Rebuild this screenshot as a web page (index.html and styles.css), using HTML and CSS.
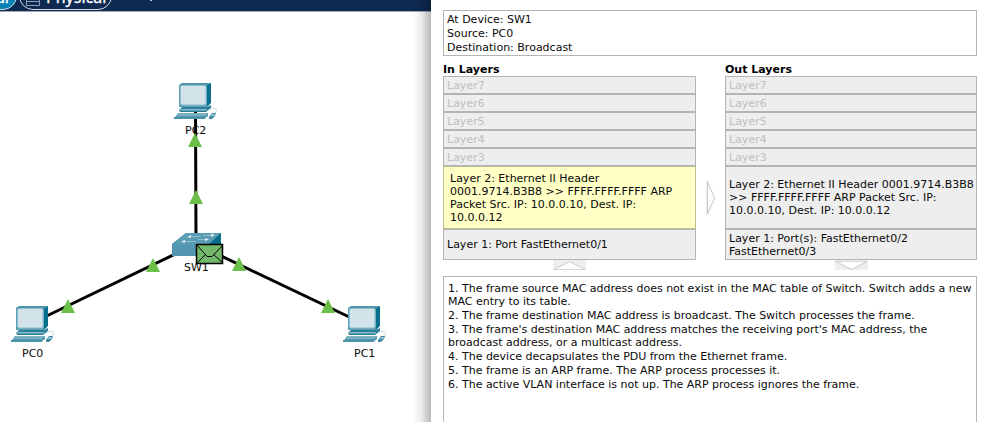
FILE: index.html
```html
<!DOCTYPE html>
<html lang="en">
<head>
<meta charset="utf-8">
<title>PDU Information</title>
<link rel="stylesheet" href="styles.css">
</head>
<body>
<main class="app">
  <section class="workspace">
    <header class="toolbar">
      <div class="tab tab-active"><span>Logical</span></div>
      <div class="tab tab-physical">
        <svg class="tab-icon" width="14" height="12" viewBox="0 0 14 12"><path d="M.5 0V11.500H13.500V0M0 3.500H14M0 7.500H14" fill="none" stroke="#8e9db2"/></svg>
        <span>Physical</span>
      </div>
      <i class="tick"></i>
    </header>
    <svg class="topology" width="431" height="411" viewBox="0 11 431 411">
      <defs>
        <g id="pc">
          <path d="M5 2 8 0H37L33 2V24H5Z" fill="#4d94ab"/>
          <path d="M33 2 37 0V20L33 24Z" fill="#08708c"/>
          <path d="M5 2H33V24H5Z" fill="#5b9fb5"/>
          <rect x="6.500" y="2.500" width="25.500" height="19.500" rx="2" fill="#d3e3ea" stroke="#8fc0d0"/>
          <path d="M8 24H33L37 22V25L32 29H6L5 27Z" fill="#2b8099"/>
          <path d="M5 26H33V27.500H5Z" fill="#8ab9ca"/>
          <path d="M4 30H34V33L30 36H0Z" fill="#4f98ae"/>
          <path d="M5 30H34L31 33H2Z" fill="#7cb1c3"/>
          <path d="M0 34H31V36H0Z" fill="#4c93a9"/>
          <path d="M35 34 38 30H42L41 33 38 36H35Z" fill="#3e8ba3"/>
          <path d="M36 33 38 31H42L40 33Z" fill="#95c1cf"/>
          <path d="M36 26C41 24 45 27 41 30" fill="none" stroke="#c7dce4"/>
        </g>
        <path id="up" d="M0-7 7 7H-7Z" fill="#6cc04a"/>
      </defs>
      <g stroke="#000" stroke-width="3">
        <path d="M195.500 108 196 240M196 244 30 324M196 244 364 324"/>
      </g>
      <use href="#pc" x="174" y="83"/>
      <use href="#pc" x="11" y="306"/>
      <use href="#pc" x="343" y="306"/>
      <g>
        <path d="M172 244 186 233H221V245L209 256H172Z" fill="#4f98b0"/>
        <path d="M172 244 186 233H221L209 244Z" fill="#5a9cb3"/>
        <path d="M209 244 221 233V247L209 256Z" fill="#056d8a"/>
        <path d="M172 244H209V256H172Z" fill="#5396b1"/>
        <path d="M190 236.500H201M203 235.500H212M185 241.500H196M198 239.500H206" stroke="#8dbccb"/>
        <path d="M187 237 191 235V238ZM215 235 211 233.500V237ZM181 241.500 185 240V243ZM209 239.500 205 238V241Z" fill="#e4f0f4"/>
      </g>
      <g class="device-label">
        <text x="185" y="134">PC2</text>
        <text x="184" y="271">SW1</text>
        <text x="22" y="357">PC0</text>
        <text x="354" y="357">PC1</text>
      </g>
      <use href="#up" x="195" y="140"/>
      <use href="#up" x="196" y="197"/>
      <use href="#up" x="153" y="265"/>
      <use href="#up" x="239" y="264"/>
      <use href="#up" x="68" y="306"/>
      <use href="#up" x="328" y="306"/>
      <rect x="196.500" y="244.500" width="26" height="19" fill="#74b86c" stroke="#000" stroke-width="1.500"/>
      <path d="M197 245 207 256.500H212L223 245M197 263 205.500 254.500M223 263 213.500 254.500" fill="none" stroke="#000"/>
    </svg>
  </section>
  <section class="panel">
    <div class="summary">
      <p>At Device: SW1</p>
      <p>Source: PC0</p>
      <p>Destination: Broadcast</p>
    </div>
    <div class="columns">
      <div class="column">
        <h2>In Layers</h2>
        <div class="layer off">Layer7</div>
        <div class="layer off">Layer6</div>
        <div class="layer off">Layer5</div>
        <div class="layer off">Layer4</div>
        <div class="layer off">Layer3</div>
        <div class="layer l2 selected"><span>Layer 2: Ethernet II Header<br>0001.9714.B3B8 &gt;&gt; FFFF.FFFF.FFFF ARP<br>Packet Src. IP: 10.0.0.10, Dest. IP:<br>10.0.0.12</span></div>
        <div class="layer l1">Layer 1: Port FastEthernet0/1</div>
        <svg class="arrow" width="33" height="10" viewBox="0 0 33 10"><path d="M0 0H33V10H0Z" fill="#eee"/><path d="M1 9.500 16.500 1.500 32 9.500" fill="#fff" stroke="#c8c8c8"/><path d="M0 9.500H33" stroke="#d8d8d8"/></svg>
      </div>
      <svg class="next" width="10" height="34" viewBox="0 0 10 34"><path d="M0 0H2L9 17 2 34H0Z" fill="#eee"/><path d="M1.500 1 8.500 17 1.500 33Z" fill="#fff" stroke="#c8c8c8"/></svg>
      <div class="column column-out">
        <h2>Out Layers</h2>
        <div class="layer off">Layer7</div>
        <div class="layer off">Layer6</div>
        <div class="layer off">Layer5</div>
        <div class="layer off">Layer4</div>
        <div class="layer off">Layer3</div>
        <div class="layer l2"><span>Layer 2: Ethernet II Header 0001.9714.B3B8<br>&gt;&gt; FFFF.FFFF.FFFF ARP Packet Src. IP:<br>10.0.0.10, Dest. IP: 10.0.0.12</span></div>
        <div class="layer l1"><span>Layer 1: Port(s): FastEthernet0/2<br>FastEthernet0/3</span></div>
        <svg class="arrow" width="33" height="10" viewBox="0 0 33 10"><path d="M0 0H33V10H0Z" fill="#eee"/><path d="M1 1.500 16.500 9.500 32 1.500Z" fill="#fff"/><path d="M1 1.500 16.500 9.500 32 1.500" fill="none" stroke="#c8c8c8"/><path d="M0 1.500H33" stroke="#d8d8d8"/></svg>
      </div>
    </div>
    <div class="details">
      <p>1. The frame source MAC address does not exist in the MAC table of Switch. Switch adds a new<br>MAC entry to its table.</p>
      <p>2. The frame destination MAC address is broadcast. The Switch processes the frame.</p>
      <p>3. The frame's destination MAC address matches the receiving port's MAC address, the<br>broadcast address, or a multicast address.</p>
      <p>4. The device decapsulates the PDU from the Ethernet frame.</p>
      <p>5. The frame is an ARP frame. The ARP process processes it.</p>
      <p>6. The active VLAN interface is not up. The ARP process ignores the frame.</p>
    </div>
  </section>
</main>
</body>
</html>
```

FILE: styles.css
```css
* { box-sizing: border-box; }
body {
  margin: 0;
  font: 11px/13px "DejaVu Sans", sans-serif;
  color: #0a0a0a;
  background: #fff;
}
p, h2 { margin: 0; }
.app { display: flex; width: 984px; height: 422px; overflow: hidden; }
.workspace {
  display: flex;
  flex-direction: column;
  width: 431px;
  position: relative;
}
.workspace::after {
  content: "";
  position: absolute;
  inset: 0 0 0 auto;
  width: 18px;
  background: linear-gradient(90deg, rgba(0,0,0,0), rgba(0,0,0,.08) 45%, rgba(0,0,0,.28));
}
.toolbar {
  display: flex;
  align-items: flex-end;
  flex: none;
  height: 12px;
  background: #0f2a52;
  border-bottom: 1px solid #a3abbb;
  overflow: hidden;
  color: #fff;
  font: 16px/20px "Noto Sans", sans-serif;
}
.tab {
  display: flex;
  flex: none;
  align-items: center;
  height: 28px;
  margin-bottom: 1px;
  border: 1px solid #d5dbe4;
  border-radius: 14px;
}
.tab-active {
  width: 77px;
  margin-left: -60px;
  padding-right: 7px;
  justify-content: flex-end;
  background: #0483b4;
}
.tab-physical { width: 93px; margin-left: 2px; padding-left: 6px; gap: 6px; }
.tab span { white-space: nowrap; margin-top: 2px; -webkit-text-stroke: .3px #fff; }
.tab-icon { margin-top: 7px; }
.tick { width: 2px; height: 1px; margin: 0 0 10px 38px; background: #bcc8d8; }
.topology { display: block; margin-top: -1px; }
.device-label { font: 11px "DejaVu Sans", sans-serif; fill: #0a0a0a; }
.panel { flex: none; width: 553px; padding: 10px 7px 0 12px; background: #fff; }
.summary {
  width: 534px;
  height: 46px;
  padding: 2px 3px;
  border: 1px solid #b4b4b4;
  line-height: 14px;
}
.columns { display: flex; margin-top: 7px; height: 213px; }
.column { display: flex; flex-direction: column; width: 253px; }
.column-out { width: 252px; }
h2 { height: 13px; font-size: 11px; line-height: 13px; font-weight: bold; color: #000; }
.layer {
  display: flex;
  align-items: center;
  flex: none;
  height: 18px;
  padding-left: 3px;
  border: 1px solid #b4b4b4;
  background: #eee;
  white-space: nowrap;
}
.off { color: #bfbfbf; }
.l2 { height: 63px; }
.l1 { height: 31px; }
.selected { padding-left: 6px; background: #ffffc6; border-color: #bdbd96; }
.arrow { align-self: center; }
.next { margin: 118px 9px 0 10px; }
.details {
  height: 180px;
  padding: 5px 4px;
  border: 1px solid #b4b4b4;
  white-space: nowrap;
  letter-spacing: -.01px;
}
.details p { margin-bottom: 1px; }
```
